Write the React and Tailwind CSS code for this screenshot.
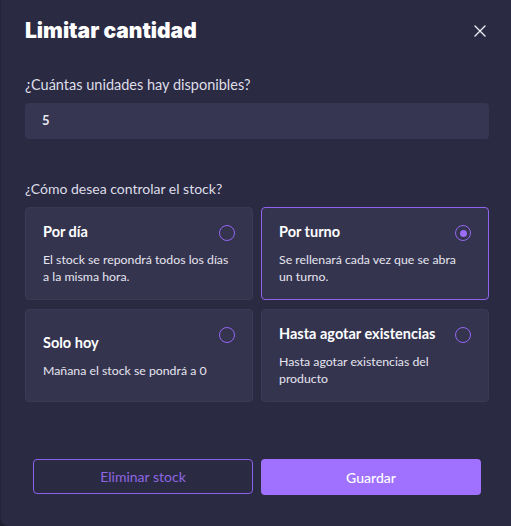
import React from "react";

const Radio = ({ checked }) => (
  <span className="absolute top-[17px] right-[17px] w-4 h-4 rounded-full border-[1.5px] border-[#9466f2] flex items-center justify-center">
    {checked && <span className="w-[7px] h-[7px] rounded-full bg-[#9a6cf8]" />}
  </span>
);

const Card = ({ title, desc, checked }) => (
  <div
    className={
      "relative h-[93px] rounded-[4px] bg-[#35344f] flex flex-col justify-center pl-[17px] pr-[12px] border " +
      (checked ? "border-[#8f63ee]" : "border-[#3b3a56]")
    }
  >
    <Radio checked={checked} />
    <div className="text-[14.5px] font-bold text-white leading-[20px]">{title}</div>
    <div className="mt-[9px] text-[12.3px] text-[#e6e6f0] leading-[17px] whitespace-nowrap">{desc}</div>
  </div>
);

export default function App() {
  return (
    <div className="w-[511px] h-[526px] bg-[#1f1f30]" style={{ fontFamily: "Lato, 'Noto Sans', sans-serif" }}>
      <div className="h-full bg-[#2b2a43] border-l border-[#25243a] rounded-bl-[8px] flex flex-col pl-6 pr-[22px]">
        <div className="flex items-center justify-between pt-[17px] h-[45px]">
          <h1
            className="text-[21px] font-black text-white leading-[28px]"
            style={{ fontFamily: "Inter, 'Noto Sans', sans-serif" }}
          >
            Limitar cantidad
          </h1>
          <svg width="14" height="14" viewBox="0 0 14 14" className="mr-[2px]">
            <path d="M2 2 L12 12 M12 2 L2 12" stroke="#ececf4" strokeWidth="1.4" strokeLinecap="round" />
          </svg>
        </div>

        <label className="mt-[30px] text-[14.5px] leading-[20px] text-[#dedee8]">¿Cuántas unidades hay disponibles?</label>
        <div className="mt-2 h-9 rounded-[4px] bg-[#363552] flex items-center pl-[17px] text-[13px] font-bold text-[#e8e8f0]">
          5
        </div>

        <label className="mt-10 text-[14px] leading-[20px] text-[#dedee8]">¿Cómo desea controlar el stock?</label>
        <div className="mt-2 grid grid-cols-2 gap-x-2 gap-y-[9px]">
          <Card title="Por día" desc={<>El stock se repondrá todos los días<br />a la misma hora.</>} />
          <Card checked title="Por turno" desc={<>Se rellenará cada vez que se abra<br />un turno.</>} />
          <Card title="Solo hoy" desc="Mañana el stock se pondrá a 0" />
          <Card title="Hasta agotar existencias" desc={<>Hasta agotar existencias del<br />producto</>} />
        </div>

        <div className="mt-[57px] px-2 grid grid-cols-2 gap-2">
          <button className="h-[35px] rounded-[4px] border border-[#8b60ea] text-[#8d67e2] text-[14px]">
            Eliminar stock
          </button>
          <button className="h-[36px] rounded-[4px] bg-[#a071ff] text-white text-[14px] font-medium">
            Guardar
          </button>
        </div>
      </div>
    </div>
  );
}
